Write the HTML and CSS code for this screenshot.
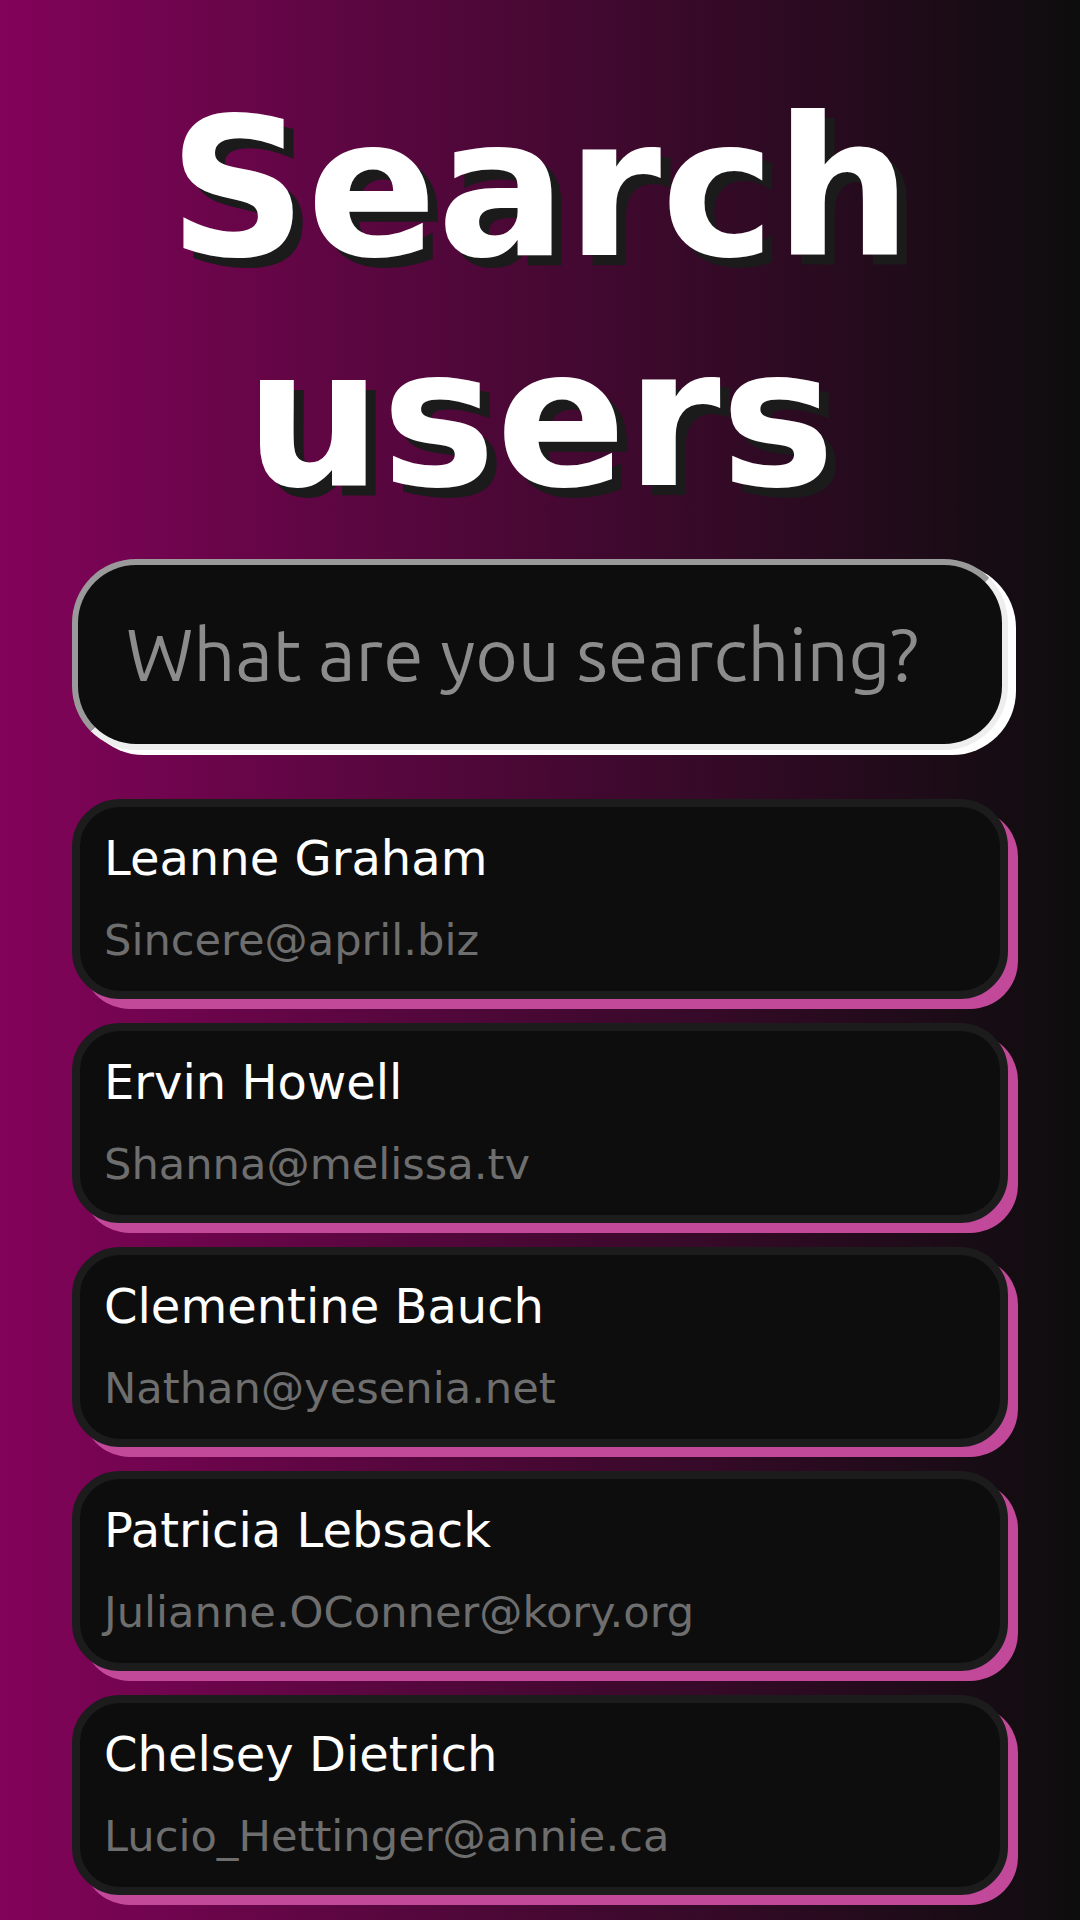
FILE: index.html
```html
<!DOCTYPE html>
<html lang="en">
<head>
<meta charset="utf-8">
<title>Search users</title>
<link rel="stylesheet" href="styles.css">
</head>
<body>
<main class="page">
  <h1 class="title">Search users</h1>
  <div class="search" role="search">
    <span class="search-placeholder">What are you searching?</span>
  </div>
  <ul class="users">
    <li class="user-card">
      <p class="user-name">Leanne Graham</p>
      <p class="user-email">Sincere@april.biz</p>
    </li>
    <li class="user-card">
      <p class="user-name">Ervin Howell</p>
      <p class="user-email">Shanna@melissa.tv</p>
    </li>
    <li class="user-card">
      <p class="user-name">Clementine Bauch</p>
      <p class="user-email">Nathan@yesenia.net</p>
    </li>
    <li class="user-card">
      <p class="user-name">Patricia Lebsack</p>
      <p class="user-email">Julianne.OConner@kory.org</p>
    </li>
    <li class="user-card">
      <p class="user-name">Chelsey Dietrich</p>
      <p class="user-email">Lucio_Hettinger@annie.ca</p>
    </li>
  </ul>
</main>
</body>
</html>
```
FILE: styles.css
```css
* {
  box-sizing: border-box;
}

html, body {
  margin: 0;
  padding: 0;
}

body {
  min-height: 100vh;
  background: linear-gradient(90deg, #82035a 0%, #0d0d0d 100%);
  font-family: "DejaVu Sans", "Liberation Sans", sans-serif;
  color: #ffffff;
  overflow: hidden;
}

.page {
  padding: 0 72px;
}

.title {
  margin: 74px 0 24px;
  font-size: 192px;
  line-height: 1.2;
  font-weight: bold;
  text-align: center;
  color: #ffffff;
  text-shadow: 10px 10px 0 #1b1b1b;
}

.search {
  display: flex;
  align-items: center;
  width: 100%;
  height: 191px;
  padding: 0 48px;
  border: 6px inset #eeeeee;
  border-radius: 64px;
  background: #0d0d0d;
  box-shadow: 8px 5px 0 #ffffff;
}

.search-placeholder {
  font-family: "Ubuntu", "Noto Sans", "Open Sans", sans-serif;
  font-size: 73px;
  color: #8c8c8c;
  white-space: nowrap;
}

.users {
  list-style: none;
  margin: 49px 0 0;
  padding: 0;
  display: flex;
  flex-direction: column;
  gap: 24px;
}

.user-card {
  padding: 23px 24px 26px;
  border: 8px solid #1c1c1c;
  border-radius: 48px;
  background: #0d0d0d;
  box-shadow: 10px 10px 0 #c2489a;
}

.user-name {
  margin: 0;
  font-size: 48px;
  color: #ffffff;
}

.user-email {
  margin: 29px 0 0;
  font-size: 43.2px;
  color: #6e6e6e;
}
```
